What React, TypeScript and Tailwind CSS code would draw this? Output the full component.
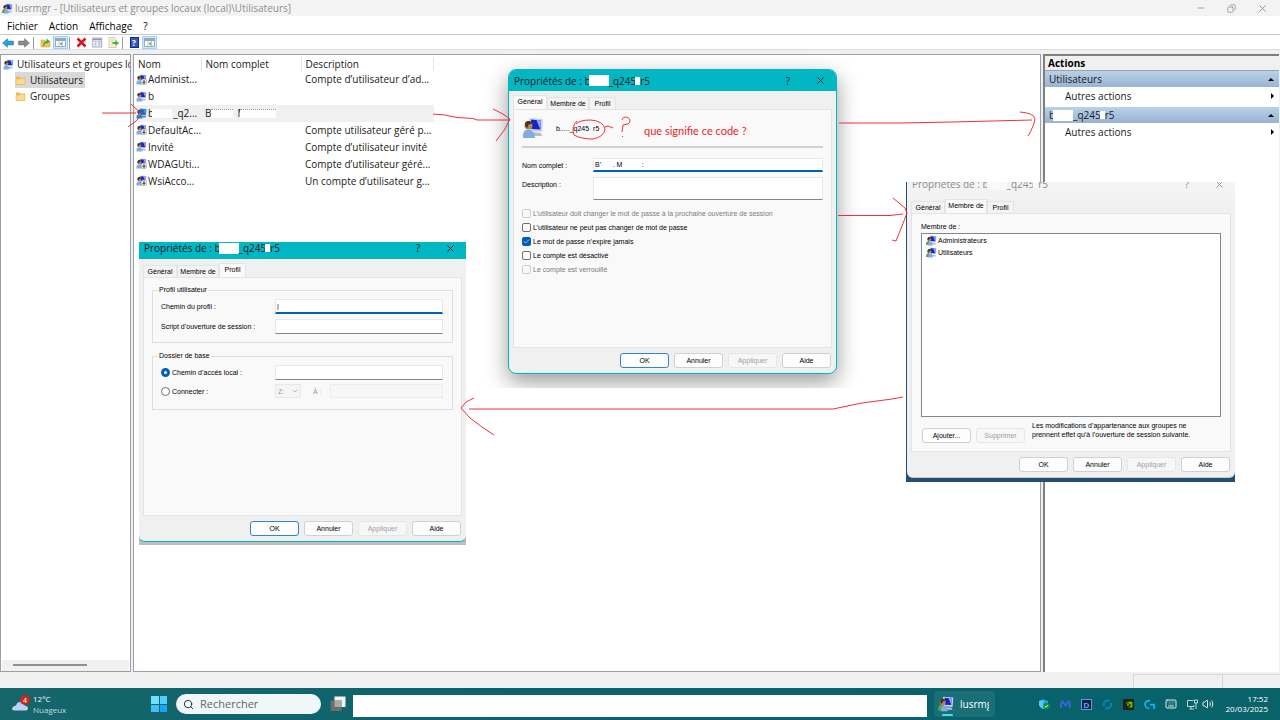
import type { ReactNode } from "react";
import { Check, ChevronDown, Copy, Keyboard, Minus, Search, Volume2, X } from "lucide-react";

const users = [
  { name: "Administ...", description: "Compte d’utilisateur d’ad...", disabled: true },
  { name: "b", description: "" },
  { name: "b", description: "", selected: true },
  { name: "DefaultAc...", description: "Compte utilisateur géré p...", disabled: true },
  { name: "Invité", description: "Compte d’utilisateur invité" },
  { name: "WDAGUti...", description: "Compte d’utilisateur géré...", disabled: true },
  { name: "WsiAcco...", description: "Un compte d’utilisateur g...", disabled: true },
];

const options = [
  { label: "L’utilisateur doit changer le mot de passe à la prochaine ouverture de session", disabled: true },
  { label: "L’utilisateur ne peut pas changer de mot de passe" },
  { label: "Le mot de passe n’expire jamais", checked: true },
  { label: "Le compte est désactivé" },
  { label: "Le compte est verrouillé", disabled: true },
];

const UserIcon = ({ className = "size-[11px]", selected = false, disabled = false, group = false }) => (
  <svg viewBox="0 0 22 22" className={`shrink-0 ${className}`} aria-hidden="true">
    <path d="M7 1 L21 2 L20 15 L8 14 Z" fill={selected ? "#3c8fd0" : "#c9d3e6"} />
    <path d="M9 2.5 L19 3.5 L18.3 12.5 L9.500 12 Z" fill={selected ? "#1667c0" : "#1424c8"} />
    <path d="M14.500 3 L19 3.500 L18.300 12.500 Z" fill={selected ? "#4aa0e6" : "#8fa8f2"} />
    <path d="M11 15 L19 16 L20 19 L11 19 Z" fill={selected ? "#3c8fd0" : "#b9bfca"} />
    {group && <path d="M0 20 Q0 12 5 12 Q9 12 9 20 Z" fill="#5fa052" />}
    <circle cx="6.500" cy="8.500" r="4" fill={selected ? "#4d7596" : "#b98552"} />
    <path d="M3 8 Q3 3.500 7 4 Q10 4 10.500 7 Q6 6 5.500 11 Q3.500 10.500 3 8 Z" fill={selected ? "#234f78" : "#4b3220"} />
    <path d={group ? "M4 21 Q4 13 9 13 Q14 14 13.500 21 Z" : "M1 21 Q0 13 6 12.500 Q13 13 13 21 Z"} fill={selected ? "#2b86cf" : "#7eaede"} />
    {disabled && (
      <>
        <circle cx="16" cy="15.500" r="6" fill="#fff" stroke="#777" />
        <path d="M16 11.500 V18 M13 15.500 L16 19 L19 15.500" fill="none" stroke="#222" strokeWidth="2" />
      </>
    )}
  </svg>
);

const FolderIcon = () => (
  <svg viewBox="0 0 22 22" className="size-[11px] shrink-0" aria-hidden="true">
    <path d="M2 3 H9 L11 5.500 H20 V19 H2 Z" fill="#e9bd55" />
    <path d="M2 8 H9 L11 6.500 H20 V19 H2 Z" fill="#fbdc8c" stroke="#dcae48" />
  </svg>
);

const PanelIcon = () => (
  <svg viewBox="0 0 22 22" className="size-[11px]" aria-hidden="true">
    <rect x="1" y="3" width="20" height="16" fill="#fff" stroke="#8593a5" strokeWidth="1.500" />
    <path d="M1 4 H21 V8 H1 Z" fill="#9aa7b8" />
    <path d="M8 8 V19 M15 8 V19" stroke="#8593a5" />
    <path d="M13.500 10 V17 L9.500 13.500 Z" fill="#35a035" />
  </svg>
);

const ToolButton = ({ label, active = false, children }: { label: string; active?: boolean; children: ReactNode }) => (
  <button
    aria-label={label}
    className={`flex h-[13px] items-center justify-center ${active ? "w-[15px] border border-[#99d1ff] bg-[#cce8ff]" : "w-4"}`}
  >
    {children}
  </button>
);

const Separator = () => <span className="mr-[3px] ml-px h-3 w-px bg-[#9c9c9c]" />;

// Account name with its private parts masked
const MaskedName = ({ mask = "bg-white" }: { mask?: string }) => (
  <span className="inline-flex items-center whitespace-pre">
    <span className="w-1 overflow-hidden">b</span>
    <span className={`h-[11px] w-5 ${mask}`} />
    <span>_q245</span>
    <span className={`-ml-px h-2 w-[5px] ${mask}`} />
    <span>r5</span>
  </span>
);

const Tabs = ({ active }: { active: string }) => (
  <div role="tablist" className="flex h-[14px] items-end whitespace-nowrap">
    {["Général", "Membre de", "Profil"].map((tab) => (
      <button
        key={tab}
        role="tab"
        aria-selected={tab === active}
        className={`border border-b-0 border-[#e4e4e4] ${tab === "Général" ? "w-[34px]" : tab === "Profil" ? "w-[27px]" : "w-[42px]"} ${
          tab === active ? "h-[14px] bg-[#f9f9f9] pb-0.5" : "h-3 bg-[#f3f3f3]"
        }`}
      >
        {tab}
      </button>
    ))}
  </div>
);

const DialogButton = ({ children, primary = false, disabled = false }: { children: ReactNode; primary?: boolean; disabled?: boolean }) => (
  <button
    disabled={disabled}
    className={`h-[15px] w-[49px] shrink-0 rounded-[3px] border ${
      primary ? "border-[#2f86d0] bg-[#fdfdfd]" : disabled ? "border-[#e6e6e6] bg-[#f7f7f7] text-[#a0a0a0]" : "border-[#d0d0d0] bg-[#fdfdfd]"
    }`}
  >
    {children}
  </button>
);

const DialogBody = ({ tab, primary = false, children }: { tab: string; primary?: boolean; children: ReactNode }) => (
  <div className="px-1 pb-[5px] text-[7px] leading-[9px] text-black">
    <Tabs active={tab} />
    <div className="h-[239px] border border-[#e4e4e4] bg-[#f9f9f9] px-2">{children}</div>
    <div className="flex justify-end gap-[5px] pt-[5px] pr-px">
      <DialogButton primary={primary}>OK</DialogButton>
      <DialogButton>Annuler</DialogButton>
      <DialogButton disabled>Appliquer</DialogButton>
      <DialogButton>Aide</DialogButton>
    </div>
  </div>
);

const DialogTitle = ({ mask }: { mask?: string }) => (
  <>
    <h2 className="flex-1 whitespace-pre">
      Propriétés de : <MaskedName mask={mask} />
    </h2>
    <button aria-label="Aide" className="w-8">?</button>
    <button aria-label="Fermer" className="flex w-8 justify-center">
      <X size={11} strokeWidth={2} />
    </button>
  </>
);

const dialogFont = "font-['Liberation_Sans',sans-serif]";
const titleFont = "font-['Open_Sans',sans-serif] text-[10px]";
const field = "border border-[#e8e8e8] border-b-[#868686] bg-white px-px outline-none";
const focusedField = "border border-b-2 border-[#e8e8e8] border-b-[#005fb8] bg-white px-px outline-none";
const radio = "size-[9px] appearance-none rounded-full border border-[#707070] bg-white checked:border-[3px] checked:border-[#005fb8]";

const GeneralDialog = () => (
  <div className="absolute top-[55px] left-[462px] overflow-hidden px-[46px] pt-[14px] pb-[14px]">
    <section className={`w-[329px] overflow-hidden rounded-lg border border-[#00b7c3] bg-[#f0f0f0] shadow-[0_8px_22px_rgba(0,0,0,0.4)] ${dialogFont}`}>
      <header className={`flex h-[21px] items-center bg-[#00b7c3] pl-[5px] ${titleFont}`}>
        <DialogTitle />
      </header>
      <div className="pt-1">
        <DialogBody tab="Général" primary>
          <div className="flex h-[38px] items-center gap-3 border-b-2 border-[#d0d0d0]">
            <UserIcon className="size-[22px]" />
            <span className="flex whitespace-pre">
              <span>b....._q245</span>
              <span className="pl-1">r5</span>
            </span>
          </div>
          <div className="grid grid-cols-[71px_1fr] gap-y-[5px] pt-[10px]">
            <label htmlFor="fullname" className="pt-[3px]">Nom complet :</label>
            <input id="fullname" defaultValue="B’      . M          :" className={`h-[14px] ${focusedField}`} />
            <label htmlFor="description" className="pt-[3px]">Description :</label>
            <input id="description" className={`h-[23px] ${field}`} />
          </div>
          <div className="pt-[6px]">
            {options.map((option) => (
              <label key={option.label} className={`flex h-[14px] items-center gap-0.5 whitespace-nowrap ${option.disabled ? "text-[#7c7c7c]" : ""}`}>
                <span className="relative flex">
                  <input
                    type="checkbox"
                    defaultChecked={option.checked}
                    disabled={option.disabled}
                    className="size-[9px] appearance-none rounded-[2px] border border-[#707070] bg-[#fafafa] checked:border-[#005fb8] checked:bg-[#005fb8] disabled:border-[#cccccc]"
                  />
                  {option.checked && <Check size={7} strokeWidth={2} className="pointer-events-none absolute top-px left-px text-white" />}
                </span>
                {option.label}
              </label>
            ))}
          </div>
        </DialogBody>
      </div>
    </section>
  </div>
);

const ProfileDialog = () => (
  <section className={`absolute top-[242px] left-[139px] w-[327px] border-b-3 border-[#bdbdbd] bg-[#bdbdbd] ${dialogFont}`}>
    <div className="overflow-hidden rounded-b-md border-b border-[#00b7c3] bg-[#f0f0f0]">
      <header className={`flex h-[17px] items-center bg-[#00b7c3] pb-[5px] pl-[5px] ${titleFont}`}>
        <DialogTitle />
      </header>
      <div className="pt-1">
        <DialogBody tab="Profil" primary>
          <fieldset className="mt-2 border border-[#dedede] px-2 pb-2">
            <legend className="-ml-[3px] h-2 px-px leading-[8px]">Profil utilisateur</legend>
            <div className="grid grid-cols-[114px_168px] items-center gap-y-[5px] pt-[5px]">
              <label htmlFor="profile">Chemin du profil :</label>
              <input id="profile" defaultValue="|" className={`h-[15px] ${focusedField}`} />
              <label htmlFor="script">Script d’ouverture de session :</label>
              <input id="script" className={`h-[15px] ${field}`} />
            </div>
          </fieldset>
          <fieldset className="mt-[9px] border border-[#dedede] px-2 pb-[11px]">
            <legend className="-ml-[3px] h-2 px-px leading-[8px]">Dossier de base</legend>
            <div className="grid grid-cols-[114px_168px] items-center gap-y-1 pt-[5px]">
              <label className="flex items-center gap-0.5">
                <input type="radio" name="home" defaultChecked className={radio} />
                Chemin d’accès local :
              </label>
              <input aria-label="Chemin d’accès local" className={`h-[15px] ${field}`} />
              <label className="flex items-center gap-0.5">
                <input type="radio" name="home" className={radio} />
                Connecter :
              </label>
              <div className="flex items-center text-[#9a9a9a]">
                <span className="relative flex">
                  <select disabled aria-label="Lecteur" className="h-[14px] w-[26px] appearance-none border border-[#e8e8e8] bg-[#f5f5f5] pl-0.5">
                    <option>Z:</option>
                  </select>
                  <ChevronDown size={8} strokeWidth={2} className="pointer-events-none absolute top-[3px] right-0.5" />
                </span>
                <label htmlFor="target" className="w-[29px] pl-3">À :</label>
                <input id="target" disabled className="h-[14px] min-w-0 flex-1 border border-[#ececec] bg-[#f7f7f7]" />
              </div>
            </div>
          </fieldset>
        </DialogBody>
      </div>
    </div>
  </section>
);

const MembersDialog = () => (
  <section className={`absolute top-[182px] left-[906px] w-[329px] overflow-hidden bg-[#24506f] pb-[4px] pl-px ${dialogFont}`}>
    <div className="rounded-b-md border-b border-[#c8c8c8] bg-[#f0f0f0]">
      <header className="h-[17px] bg-[#f3f3f3]">
        <div className={`flex h-1 items-center pl-[5px] text-[#8c8c8c] ${titleFont}`}>
          <DialogTitle mask="bg-[#f9f9f9]" />
        </div>
      </header>
      <DialogBody tab="Membre de">
        <h3 className="pt-2 pl-px">Membre de :</h3>
        <ul className="mt-0.5 mr-px ml-px h-[184px] border border-[#828790] bg-white pl-1">
          {["Administrateurs", "Utilisateurs"].map((group) => (
            <li key={group} className="flex h-3 items-center gap-px">
              <UserIcon group />
              {group}
            </li>
          ))}
        </ul>
        <div className="flex gap-[5px] pt-1">
          <div className="flex gap-[5px] pt-[7px] pl-0.5">
            <DialogButton>Ajouter...</DialogButton>
            <DialogButton disabled>Supprimer</DialogButton>
          </div>
          <p className="pl-0.5 whitespace-nowrap">
            Les modifications d’appartenance aux groupes ne
            <br />
            prennent effet qu’à l’ouverture de session suivante.
          </p>
        </div>
      </DialogBody>
    </div>
  </section>
);

const Annotations = () => (
  <div className="pointer-events-none absolute top-0 left-0">
    <svg width="1280" height="720" viewBox="0 0 1280 720" fill="none" stroke="#ed1c24" strokeWidth="0.9" aria-hidden="true">
      <path d="M102 113 H136 M131 104 Q136 109 142 114 Q138 121 128 127" />
      <path d="M433 114 L445 115 L457 117.500 L473 118.500 L477 120 H510 M493 109 L503 114 L510 119 L505 129 L496 141" />
      <path d="M839 123 L900 123 L952 122 L1032 120 M1020 112 Q1034 113 1035 119 Q1034 126 1028 136" />
      <path d="M838 215.500 H890 L903 214 M893 198 L905 208 L907 213 L902 226 L896 241 L892 240" />
      <path d="M903 397 L892 399 L862 403 L833 409 H469 M474 398 L466 402 L461 408 L470 418 L482 427 L494 435" />
      <path d="M577 121 Q571 127 574 135 Q581 139 593 139 Q604 137 605 129 Q603 121 591 120 Q579 120 576 124 M605 127 L608 126 L613 128" />
      <path d="M622 120 Q623 116 628 117.500 Q632 121 628 124 L623 125 L622 132 M622 136 L623 137" />
    </svg>
    <p className="absolute top-[124px] left-[644px] font-['Lato',sans-serif] text-[11px] leading-[14px] whitespace-nowrap text-[#ed1c24]">que signifie ce code ?</p>
  </div>
);

const ActionGroup = ({ children }: { children: ReactNode }) => (
  <section className="mb-0.5">
    <h3 className="flex h-4 items-center justify-between bg-gradient-to-b from-[#b9d1ea] to-[#99b4d1] pr-[5px] pl-1">
      {children}
      <span className="border-x-[3px] border-b-[3px] border-x-transparent border-b-black" />
    </h3>
    <button className="flex h-[18px] w-full items-center justify-between pr-[5px] pl-5">
      Autres actions
      <span className="border-y-[3px] border-l-[3px] border-y-transparent border-l-black" />
    </button>
  </section>
);

const Taskbar = () => (
  <footer className="flex h-8 items-center bg-gradient-to-r from-[#14666b] via-[#0b626d] to-[#07626a] text-white">
    <div className="flex w-[151px] items-center gap-[3px] pl-3 text-[8px] leading-[11px]">
      <svg viewBox="0 0 36 36" className="size-[18px]" aria-hidden="true">
        <path d="M1 30 Q-1 26 2 24 Q4 21 8 21 Q10 13 17 14 Q24 15 25 21 Q32 22 32 27 Q31 31 28 31 H5 Z" fill="#b9d3f7" />
        <circle cx="26" cy="10" r="10" fill="#c42b1c" />
        <text x="26" y="15" fontSize="14" fill="#fff" textAnchor="middle" fontFamily="Open Sans">4</text>
      </svg>
      <p>
        12°C
        <br />
        <span className="text-[#c4dcde]">Nuageux</span>
      </p>
    </div>
    <button aria-label="Démarrer" className="grid size-4 grid-cols-2 gap-px">
      <span className="bg-[#6fe0fb]" />
      <span className="bg-[#4ed0fb]" />
      <span className="bg-[#3fc0fa]" />
      <span className="bg-[#1ba3f5]" />
    </button>
    <label className="ml-[9px] flex h-5 w-[145px] items-center gap-[6px] rounded-full bg-[#f0f7f8] pl-[7px] text-[#222]">
      <Search size={11} strokeWidth={2} />
      <input placeholder="Rechercher" aria-label="Rechercher" className="w-24 bg-transparent text-[11px] outline-none placeholder:text-[#5f6668]" />
    </label>
    <button aria-label="Vue des tâches" className="mr-[7px] ml-[9px]">
      <svg viewBox="0 0 32 32" className="size-4" aria-hidden="true">
        <rect x="9" y="1" width="22" height="21" fill="#f4f4f4" />
        <rect x="1" y="9" width="22" height="21" fill="#6d6d6d" />
        <rect x="9" y="9" width="14" height="13" fill="#a8a8a8" />
      </svg>
    </button>
    <div className="mt-1 h-[22px] flex-1 bg-white" />
    <button className="relative mr-[7px] ml-[7px] flex h-[26px] w-[61px] items-center gap-[6px] rounded bg-[#1a6f77] pl-1 text-[10px]">
      <UserIcon className="size-4" group />
      <span className="w-[29px] overflow-hidden text-left">lusrmg</span>
      <span className="absolute bottom-px left-2 h-0.5 w-[11px] rounded-full bg-[#4cdfe8]" />
    </button>
    <div className="flex w-[278px] items-center pl-[37px]">
      <div className="flex items-center gap-[10px]">
        <svg viewBox="0 0 22 22" className="size-[11px]" aria-hidden="true">
          <path d="M9 1 L18 4 V11 Q17 17 9 20 Q1 17 0 11 V4 Z" fill="#20a4ea" />
          <path d="M9 1 V20 Q1 17 0 11 V4 Z" fill="#54c6f7" />
          <circle cx="15" cy="14" r="6.500" fill="#13913a" />
          <path d="M12 14 L14 16.500 L18 12" fill="none" stroke="#fff" strokeWidth="1.600" />
        </svg>
        <svg viewBox="0 0 22 22" className="size-[11px]" fill="none" stroke="#3e62dd" strokeWidth="4" aria-hidden="true">
          <path d="M3 18 Q0 9 5 5 L11 13 L17 5 Q22 9 18 18" />
        </svg>
        <svg viewBox="0 0 22 22" className="size-[11px]" aria-hidden="true">
          <rect x="1" y="1" width="20" height="20" fill="#15213f" stroke="#5f96ef" strokeWidth="2" />
          <text x="11" y="17" fontSize="16" fontWeight="bold" fill="#6fa0f5" textAnchor="middle" fontFamily="Liberation Sans">D</text>
        </svg>
        <svg viewBox="0 0 22 22" className="size-[11px]" fill="none" stroke="#0b86b4" strokeWidth="4" aria-hidden="true">
          <path d="M4 14 A8 8 0 0 1 15 4 M18 8 A8 8 0 0 1 7 18" />
        </svg>
        <svg viewBox="0 0 22 22" className="size-[11px]" aria-hidden="true">
          <rect width="22" height="22" fill="#1d2116" />
          <path d="M3 11 Q10 3 19 6 V17 H9 Q14 16 16 12 Q11 6 3 11 Z" fill="#76b900" />
          <circle cx="10" cy="12" r="2" fill="#76b900" />
        </svg>
        <svg viewBox="0 0 22 22" className="size-[11px]" fill="none" stroke="#12b5f5" strokeWidth="3.500" aria-hidden="true">
          <path d="M12 3 Q2 3 2 11 Q3 18 11 19 M12 11 H20 V20" />
        </svg>
        <Keyboard size={12} strokeWidth={2} className="text-[#dcebec]" />
        <svg viewBox="0 0 22 22" className="-mr-[6px] size-[11px]" fill="none" stroke="#e8f2f2" strokeWidth="1.600" aria-hidden="true">
          <path d="M13 3 H1 V15 H14 V12 M5 20 H14 M8 15 V20 M15 2 H21 V8 H15 Z M18 8 V20" />
        </svg>
        <Volume2 size={12} strokeWidth={2} className="text-[#e8f2f2]" />
      </div>
      <time className="ml-auto pr-3 text-right text-[8px] leading-[10px]">
        17:52
        <br />
        20/03/2025
      </time>
    </div>
  </footer>
);

const App = () => (
  <div className="relative flex min-h-screen flex-col bg-[#f0f0f0] font-['Open_Sans',sans-serif] text-[10px] leading-[14px] text-[#1a1a1a]">
    <header className="flex h-4 items-center bg-[#f3f3f3] pl-[2px] text-[#8f8f8f]">
      <UserIcon group />
      <h1 className="flex-1 pl-0.5">lusrmgr - [Utilisateurs et groupes locaux (local)\Utilisateurs]</h1>
      <div className="flex gap-[21px] pr-3">
        <button aria-label="Réduire"><Minus size={10} strokeWidth={2} /></button>
        <button aria-label="Restaurer"><Copy size={9} strokeWidth={2} className="-scale-x-100" /></button>
        <button aria-label="Fermer"><X size={11} strokeWidth={2} /></button>
      </div>
    </header>
    <nav className="flex h-[19px] items-center gap-[11px] border-b border-[#c8c8c8] bg-white pt-0.5 pl-[7px] text-black">
      <button>Fichier</button>
      <button>Action</button>
      <button>Affichage</button>
      <button>?</button>
    </nav>
    <div className="flex h-[15px] items-center border-b border-[#dcdcdc] bg-white pt-px">
      <ToolButton label="Précédent">
        <svg viewBox="0 0 22 18" className="h-[10px] w-3"><path d="M1 9 L10 1 V5.500 H21 V12.500 H10 V17 Z" fill="#2aa1e0" stroke="#1878b4" /></svg>
      </ToolButton>
      <ToolButton label="Suivant">
        <svg viewBox="0 0 22 18" className="h-[10px] w-3"><path d="M21 9 L12 1 V5.500 H1 V12.500 H12 V17 Z" fill="#8b8b8b" stroke="#6c6c6c" /></svg>
      </ToolButton>
      <Separator />
      <ToolButton label="Dossier parent">
        <svg viewBox="0 0 22 22" className="size-[11px]">
          <path d="M2 6 H9 L11 9 H20 V20 H2 Z" fill="#f0c75e" stroke="#c99b35" />
          <path d="M6 18 Q6 9 13 8 V3 L20 9 L13 14 V11 Q9 12 8 18 Z" fill="#48a938" />
        </svg>
      </ToolButton>
      <ToolButton label="Arborescence" active><PanelIcon /></ToolButton>
      <Separator />
      <ToolButton label="Supprimer">
        <svg viewBox="0 0 22 22" className="size-[11px]"><path d="M3 3 L19 19 M19 3 L3 19" stroke="#d8171c" strokeWidth="5" /></svg>
      </ToolButton>
      <ToolButton label="Propriétés">
        <svg viewBox="0 0 22 22" className="size-[11px]" fill="none" stroke="#8794a8">
          <rect x="1.500" y="2" width="18" height="18" fill="#f4f7fb" strokeWidth="1.500" />
          <path d="M1.500 5 H19.500" strokeWidth="3" />
          <path d="M5 9 H9 M12 9 H17 M5 12.500 H9 M12 12.500 H17 M5 16 H9 M12 16 H17" strokeWidth="1.500" />
        </svg>
      </ToolButton>
      <ToolButton label="Exporter">
        <svg viewBox="0 0 22 22" className="size-[11px]">
          <path d="M2 1 H13 L16 4 V21 H2 Z" fill="#fdf7dc" stroke="#a89d78" />
          <path d="M5 6 H12 M5 10 H9 M5 16 H10" stroke="#a89d78" />
          <path d="M9 10 H15 V6 L22 12 L15 18 V14 H9 Z" fill="#49b43c" />
        </svg>
      </ToolButton>
      <Separator />
      <ToolButton label="Aide">
        <span className="h-[11px] w-[9px] border border-[#152a70] bg-[#3559c4] text-[8px] leading-[9px] font-bold text-white">?</span>
      </ToolButton>
      <ToolButton label="Volet Actions" active><PanelIcon /></ToolButton>
    </div>

    <main className="flex min-h-[560px] flex-1 gap-0.5 pt-1">
      <aside className="flex w-[131px] flex-col border border-[#9a9ea8] bg-white pt-px">
        <div className="flex h-4 items-center gap-[3px] overflow-hidden pl-0.5 whitespace-nowrap">
          <UserIcon />
          <span className="min-w-0 overflow-hidden">Utilisateurs et groupes lo</span>
        </div>
        <button className="ml-[14px] flex h-4 w-[70px] items-center gap-1 bg-[#d9d9d9]"><FolderIcon />Utilisateurs</button>
        <button className="ml-[14px] flex h-4 items-center gap-1"><FolderIcon />Groupes</button>
        <div className="mx-px mt-auto h-[11px] bg-[#f0f0f0] pt-1 pl-[11px]">
          <div className="h-0.5 w-[74px] bg-[#909090]" />
        </div>
      </aside>

      <section className="min-w-0 flex-1 border border-[#9a9ea8] bg-white pt-0.5">
        <table className="h-[132px] w-[300px] table-fixed border-collapse text-left whitespace-nowrap">
          <thead>
            <tr>
              <th className="w-[67px] border-r border-[#e5e5e5] py-0 pl-1 font-normal">Nom</th>
              <th className="w-[100px] border-r border-[#e5e5e5] py-0 pl-1 font-normal">Nom complet</th>
              <th className="border-r border-[#e5e5e5] py-0 pl-1 font-normal">Description</th>
            </tr>
          </thead>
          <tbody>
            {users.map((user, i) => (
              <tr key={i} className={user.selected ? "bg-[#f0f0f0]" : ""}>
                <td className="py-0 pl-0.5">
                  <span className="flex items-center gap-px">
                    <UserIcon selected={user.selected} disabled={user.disabled} />
                    {user.name}
                    {user.selected && (
                      <>
                        <span className="-ml-[3px] h-[9px] w-5 bg-white" />
                        <span>_q2...</span>
                      </>
                    )}
                  </span>
                </td>
                <td className="py-0 pl-1">
                  {user.selected && (
                    <span className="flex items-center">
                      B
                      <span className="h-[9px] w-[22px] border-t border-dotted border-[#999] bg-white" />
                      <span className="ml-1 w-[3px] overflow-hidden">M</span>
                      <span className="h-[9px] w-9 border-t border-dotted border-[#999] bg-white" />
                    </span>
                  )}
                </td>
                <td className="py-0 pl-1">{user.description}</td>
              </tr>
            ))}
          </tbody>
        </table>
      </section>

      <aside className="mr-px w-[236px] border-t-2 border-l-2 border-[#808080] bg-white">
        <h2 className="h-[15px] border-b border-[#a0a0a0] bg-[#f0f0f0] pl-[3px] font-bold text-black">Actions</h2>
        <ActionGroup>Utilisateurs</ActionGroup>
        <ActionGroup><MaskedName /></ActionGroup>
      </aside>
    </main>

    <div className="flex h-4 justify-end pt-0.5">
      <span className="w-[89px] border-t border-l border-[#d7d7d7]" />
      <span className="w-[58px] border-t border-l border-[#d7d7d7]" />
    </div>
    <Taskbar />

    <GeneralDialog />
    <ProfileDialog />
    <MembersDialog />
    <Annotations />
  </div>
);

export default App;
